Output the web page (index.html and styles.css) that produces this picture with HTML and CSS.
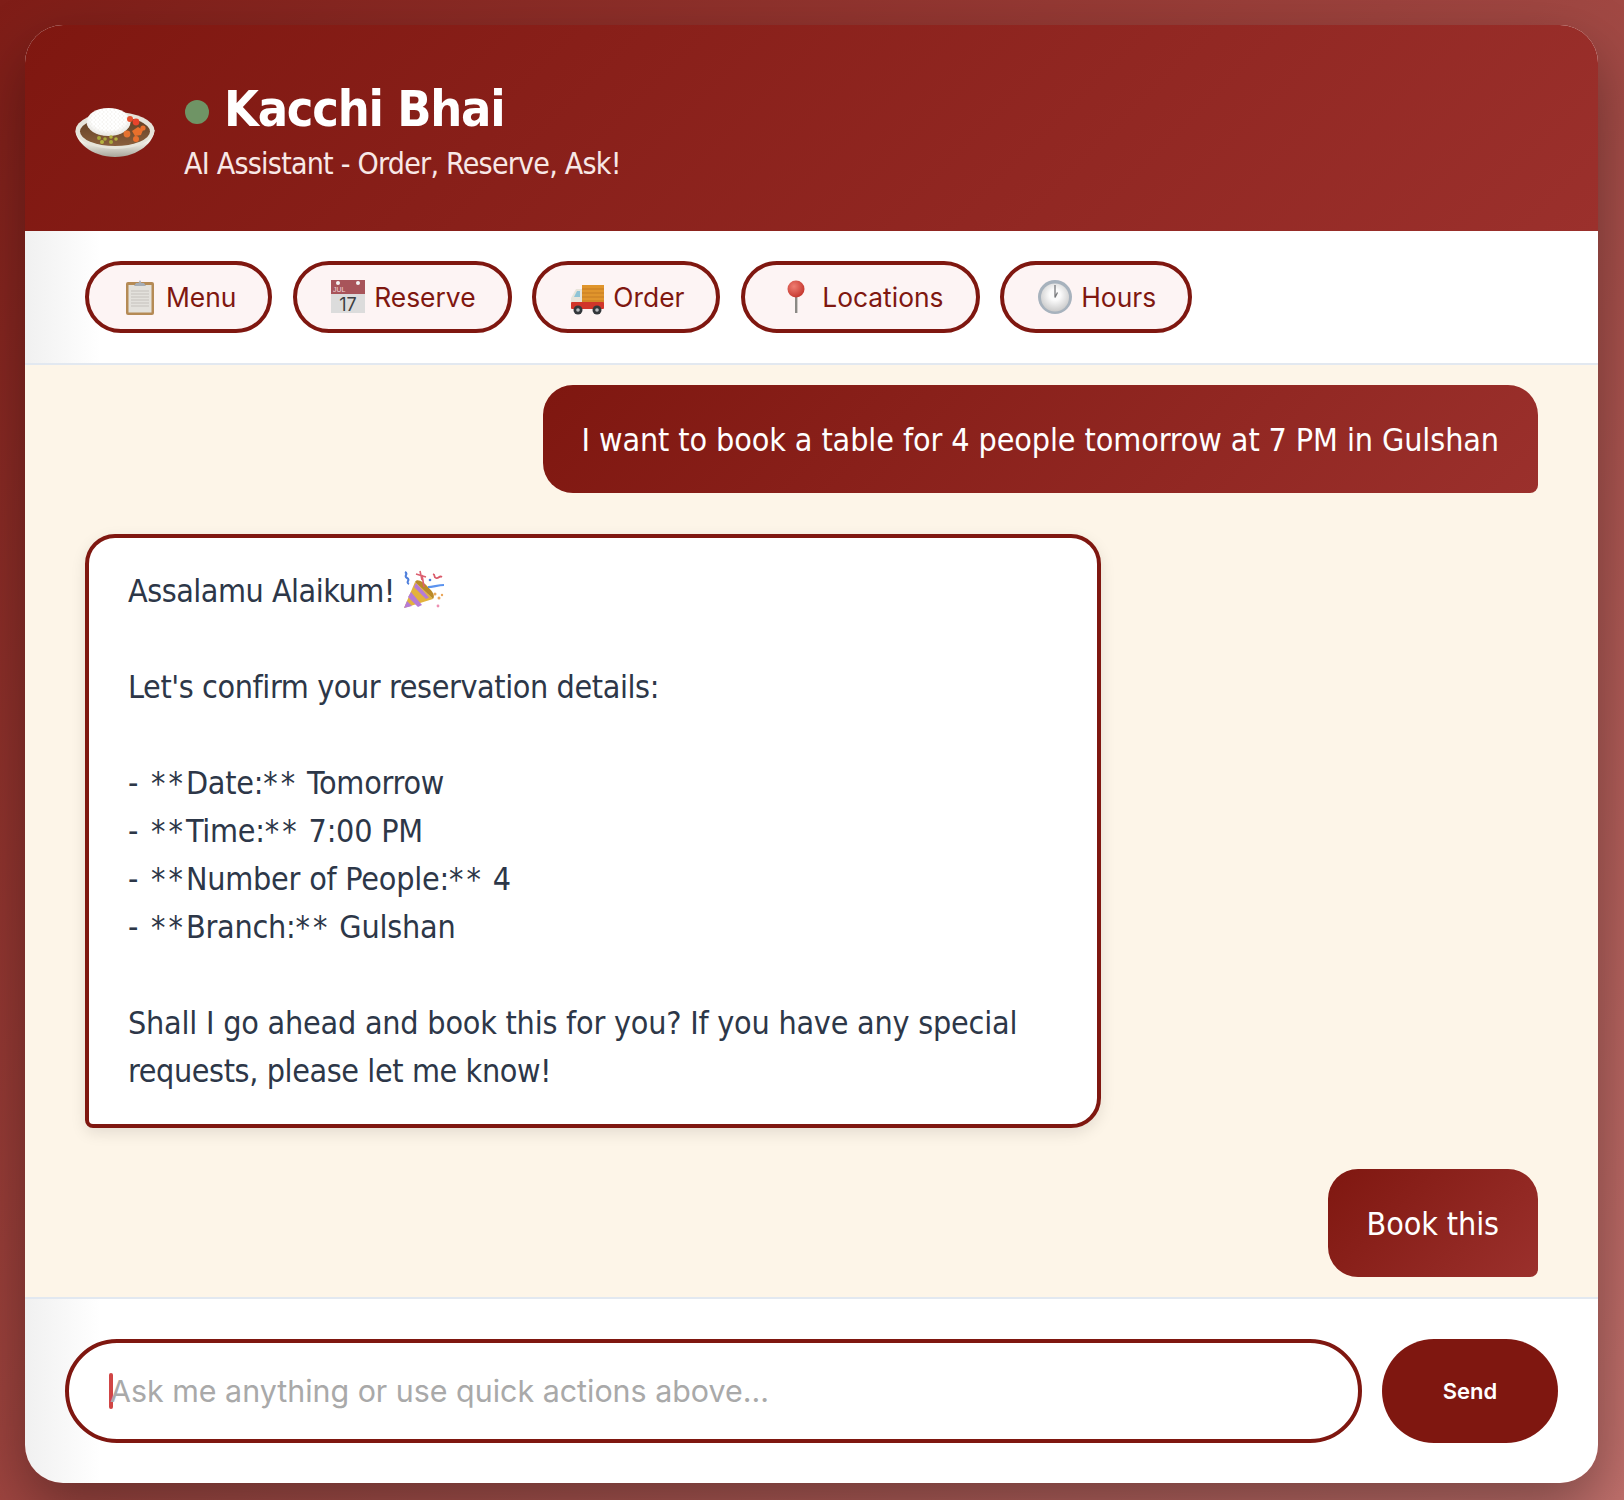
FILE: index.html
```html
<!DOCTYPE html>
<html lang="en">
<head>
<meta charset="utf-8">
<title>Kacchi Bhai</title>
<link rel="stylesheet" href="styles.css">
</head>
<body>
<main class="chat">
  <header class="hero">
    <svg class="bowl" viewBox="0 0 80 50" aria-hidden="true">
      <defs>
        <linearGradient id="bowlG" x1="0" y1="0" x2="0" y2="1"><stop offset=".45" stop-color="#f2f0e8"/><stop offset="1" stop-color="#a8a69a"/></linearGradient>
        <linearGradient id="soupG" x1="0" y1="0" x2="0" y2="1"><stop offset="0" stop-color="#5f3d22"/><stop offset="1" stop-color="#8a5f3c"/></linearGradient>
        <radialGradient id="riceG" cx=".5" cy=".4" r=".7"><stop offset=".55" stop-color="#ffffff"/><stop offset="1" stop-color="#dad8d0"/></radialGradient>
        <pattern id="grains" width="4" height="4" patternUnits="userSpaceOnUse"><path d="M0 1h1.500M2.500 3h1.500" stroke="#e6e4dd" stroke-width=".7"/></pattern>
      </defs>
      <path d="M.5 24C.5 34 16 50 40 50s39.500-16 39.500-27z" fill="url(#bowlG)"/>
      <ellipse cx="40" cy="23.500" rx="39.500" ry="18.500" fill="#e6e4da"/>
      <ellipse cx="40" cy="24.500" rx="35" ry="14.500" fill="url(#soupG)"/>
      <ellipse cx="33.500" cy="15" rx="22" ry="14" fill="url(#riceG)"/>
      <ellipse cx="33.500" cy="15" rx="22" ry="14" fill="url(#grains)"/>
      <circle cx="55" cy="12" r="3" fill="#e8512f"/><circle cx="61" cy="15" r="3.400" fill="#e8432b"/>
      <path d="M57 24l6-4 5 3-2 5-6 1z" fill="#e8702c"/><circle cx="68" cy="21" r="2.600" fill="#e8702c"/><circle cx="52" cy="27" r="3.400" fill="#e57230"/><circle cx="61" cy="32" r="3" fill="#e86f2d"/>
      <circle cx="24" cy="31" r="2" fill="#a8a83a"/><circle cx="27" cy="35" r="2" fill="#b5b33e"/><circle cx="30" cy="32" r="1.800" fill="#a8a83a"/><circle cx="36" cy="30" r="1.800" fill="#b5b33e"/><circle cx="36" cy="35" r="2" fill="#a8a83a"/><circle cx="41" cy="32" r="1.800" fill="#b5b33e"/>
    </svg>
    <div class="hero-text">
      <h1 class="title"><span class="dot"></span>Kacchi Bhai</h1>
      <p class="subtitle">AI Assistant - Order, Reserve, Ask!</p>
    </div>
  </header>

  <nav class="actions">
    <button class="pill">
      <svg class="icon" viewBox="0 0 36 36" aria-hidden="true">
        <rect x="4" y="3" width="28" height="33" rx="2" fill="#b58a55"/>
        <rect x="6.500" y="6" width="23" height="27.500" fill="#e3e1dc"/>
        <path d="M9 12h18M9 15h18M9 18h18M9 21h18M9 24h18M9 27h18" stroke="#cfccc6" stroke-width="1.600"/>
        <path d="M12 7l2-3h2.500l1.500-3 1.500 3H22l2 3z" fill="#a6adb5"/>
      </svg>
      <span>Menu</span>
    </button>
    <button class="pill">
      <svg class="icon" viewBox="0 0 36 36" aria-hidden="true">
        <rect x="1" y="1" width="34" height="33" fill="#dcdcdc"/>
        <rect x="1" y="1" width="34" height="14" fill="#a8545a"/>
        <circle cx="8" cy="4" r="2" fill="#f4f4f4"/><circle cx="28" cy="4" r="2" fill="#f4f4f4"/>
        <text class="cal-month" x="3" y="13">JUL</text>
        <text class="cal-day" x="18" y="31.500" text-anchor="middle">17</text>
      </svg>
      <span>Reserve</span>
    </button>
    <button class="pill">
      <svg class="icon" viewBox="0 0 36 36" aria-hidden="true">
        <rect x="13" y="6" width="22" height="21" fill="#e0952c"/>
        <path d="M13 10h22M13 14h22M13 18h22M13 22h22" stroke="#c67c22" stroke-width="1.200"/>
        <path d="M13 10H7l-5 9v10h11z" fill="#e8e4da"/>
        <path d="M11 12H8l-3 6h6z" fill="#8fc4d6"/>
        <rect x="2" y="23" width="33" height="7" rx="1" fill="#d1352a"/>
        <circle cx="9" cy="31" r="4.500" fill="#33373b"/><circle cx="9" cy="31" r="1.800" fill="#b8bcc0"/>
        <circle cx="28" cy="31" r="4.500" fill="#33373b"/><circle cx="28" cy="31" r="1.800" fill="#b8bcc0"/>
      </svg>
      <span>Order</span>
    </button>
    <button class="pill">
      <svg class="icon" viewBox="0 0 36 36" aria-hidden="true">
        <defs><radialGradient id="pinG" cx=".38" cy=".35" r=".7"><stop offset="0" stop-color="#ef7d72"/><stop offset="1" stop-color="#c3342c"/></radialGradient></defs>
        <rect x="17" y="15" width="2.400" height="19" fill="#8b8985"/>
        <circle cx="18" cy="10" r="8.500" fill="url(#pinG)"/>
      </svg>
      <span>Locations</span>
    </button>
    <button class="pill">
      <svg class="icon" viewBox="0 0 36 36" aria-hidden="true">
        <defs><radialGradient id="clockG" cx=".5" cy=".4" r=".65"><stop offset=".3" stop-color="#fbfbfb"/><stop offset="1" stop-color="#c4c4c4"/></radialGradient></defs>
        <circle cx="18" cy="18" r="17" fill="#a7b2bd"/>
        <circle cx="18" cy="18.500" r="14" fill="url(#clockG)"/>
        <path d="M18 6v12.500l2.500-5" fill="none" stroke="#77797c" stroke-width="1.300"/>
      </svg>
      <span>Hours</span>
    </button>
  </nav>

  <section class="messages">
    <div class="bubble user">I want to book a table for 4 people tomorrow at 7 PM in Gulshan</div>
    <div class="bubble bot">
      <p class="bot-line tighter">Assalamu Alaikum! <svg class="popper" viewBox="0 0 42 40" aria-hidden="true">
        <path d="M1 38L12 12l18 17z" fill="#e3b23c"/>
        <path d="M1 38l3-7 5 5zM5 27l10 10 4-2L8 22zM11 17l12 12 3-1.500L13 13z" fill="#b57bd6"/>
        <path d="M12 12l18 17c3-4-2-9-6-13s-10-8-12-4z" fill="#b98a28"/>
        <path d="M2 2c4 2-2 4 2 6s-2 4 2 6" fill="none" stroke="#4f7fdc" stroke-width="2"/>
        <path d="M17 1l2 9M13 4l10 3M19 5l2 12" fill="none" stroke="#dc6070" stroke-width="1.600"/>
        <path d="M30 4c3 1 0 3 3 4s3-3 6-1" fill="none" stroke="#d95a6a" stroke-width="1.800"/>
        <path d="M25 17c5 0 10-2 16-2" fill="none" stroke="#5b93ef" stroke-width="2.200"/>
        <circle cx="27" cy="10" r="1.300" fill="#4f7fdc"/><circle cx="32" cy="24" r="1.500" fill="#e9a65a"/><circle cx="36" cy="28" r="1.500" fill="#e9a65a"/><circle cx="35" cy="36" r="1.400" fill="#ee8fb0"/><circle cx="39" cy="25" r="1.200" fill="#e9a65a"/>
      </svg></p>
      <p class="bot-line blank"></p>
      <p class="bot-line tight">Let's confirm your reservation details:</p>
      <p class="bot-line blank"></p>
      <p class="bot-line"><span class="dash">-</span> <span class="stars">**</span>Date:<span class="stars">**</span> Tomorrow</p>
      <p class="bot-line"><span class="dash">-</span> <span class="stars">**</span>Time:<span class="stars">**</span> 7:00 PM</p>
      <p class="bot-line"><span class="dash">-</span> <span class="stars">**</span>Number of People:<span class="stars">**</span> 4</p>
      <p class="bot-line"><span class="dash">-</span> <span class="stars">**</span>Branch:<span class="stars">**</span> Gulshan</p>
      <p class="bot-line blank"></p>
      <p class="bot-line">Shall I go ahead and book this for you? If you have any special <span class="tight">requests, please let me know!</span></p>
    </div>
    <div class="bubble user">Book this</div>
  </section>

  <footer class="composer">
    <div class="field"><span class="caret"></span><span class="placeholder">Ask me anything or use quick actions above...</span></div>
    <button class="send">Send</button>
  </footer>
</main>
</body>
</html>
```
FILE: styles.css
```css
* { box-sizing: border-box; }
html, body { margin: 0; height: 1500px; }
body {
  padding: 25px 26px 17px 25px;
  background: linear-gradient(135deg, #7f1d17 0%, #c0706c 100%);
  font-family: "DejaVu Sans Condensed", "DejaVu Sans", sans-serif;
}
.chat {
  height: 1458px;
  display: flex;
  flex-direction: column;
  border-radius: 38px;
  overflow: hidden;
  background: linear-gradient(90deg, #f0f0f0 0, #ffffff 75px);
  box-shadow: 0 25px 60px rgba(0, 0, 0, .35);
}
.hero {
  height: 206px;
  flex: none;
  display: flex;
  align-items: center;
  gap: 30px;
  padding: 0 50px;
  background: linear-gradient(135deg, #7f1710 0%, #9b302c 100%);
  color: #fff;
}
.bowl { width: 80px; height: 50px; flex: none; margin-top: 8px; }
.hero-text { display: flex; flex-direction: column; margin-top: 6px; }
.title {
  margin: 0;
  display: flex;
  align-items: center;
  gap: 15px;
  font-size: 50px;
  letter-spacing: -1.2px;
  line-height: 58px;
  font-weight: 700;
}
.dot { width: 24px; height: 24px; border-radius: 50%; background: #6f9465; margin-top: 6px; }
.subtitle { margin: 8px 0 0 -1px; font-size: 30px; letter-spacing: -.75px; line-height: 36px; color: #f8e8e6; }

.actions {
  flex: none;
  display: flex;
  gap: 20.75px;
  padding: 30px 60px;
  border-bottom: 2px solid #e2e8f0;
}
.pill {
  height: 72px;
  display: flex;
  align-items: center;
  gap: 8px;
  padding: 0 32px 0 33px;
  border: 4px solid #7f1710;
  border-radius: 36px;
  background: #fdf4f4;
  color: #7f1710;
  font-family: Inter, sans-serif;
  font-size: 26.4px;
}
.icon { width: 36px; height: 36px; flex: none; }
.cal-month { font-family: "Liberation Sans", sans-serif; font-size: 7px; fill: #f1d9da; }
.cal-day { font-family: Inter, sans-serif; font-size: 18px; fill: #3c3f42; }

.messages {
  flex: 1;
  display: flex;
  flex-direction: column;
  align-items: flex-end;
  gap: 41px;
  padding: 20px 60px;
  background: #fdf5e8;
}
.bubble { font-size: 32px; line-height: 48px; letter-spacing: -.22px; }
.user {
  padding: 31px 39px 29px;
  border-radius: 30px 30px 8px 30px;
  background: linear-gradient(135deg, #7f1710 0%, #9b302c 100%);
  color: #fff;
  letter-spacing: -.1px;
}
.bot {
  align-self: flex-start;
  width: 1016px;
  height: 594px;
  padding: 29px 39px 27px;
  border: 4px solid #7f1710;
  border-radius: 30px 30px 30px 8px;
  background: #fff;
  color: #2d3748;
  box-shadow: 0 5px 15px rgba(0, 0, 0, .1);
}
.bot-line { margin: 0; }
.tight { letter-spacing: -.4px; }
.tighter { letter-spacing: -.5px; }
.dash { margin-right: 4px; }
.stars { letter-spacing: 3px; }
.blank { height: 48px; }
.popper { width: 42px; height: 40px; vertical-align: -8px; }

.composer {
  flex: none;
  display: flex;
  gap: 20px;
  padding: 40px;
  border-top: 2px solid #e2e8f0;
}
.field {
  flex: 1;
  height: 104px;
  display: flex;
  align-items: center;
  padding: 0 40px;
  border: 4px solid #7f1710;
  border-radius: 52px;
  background: #fff;
  font-family: Inter, sans-serif;
  font-size: 30.4px;
  color: #a9a9a9;
}
.caret { width: 4px; height: 36px; border-radius: 2px; background: #d04545; flex: none; margin-right: -3px; }
.send {
  width: 176px;
  height: 104px;
  border: 0;
  border-radius: 52px;
  background: #7f1710;
  color: #fff;
  font-family: Inter, sans-serif;
  font-size: 22px;
  font-weight: 600;
}
```
